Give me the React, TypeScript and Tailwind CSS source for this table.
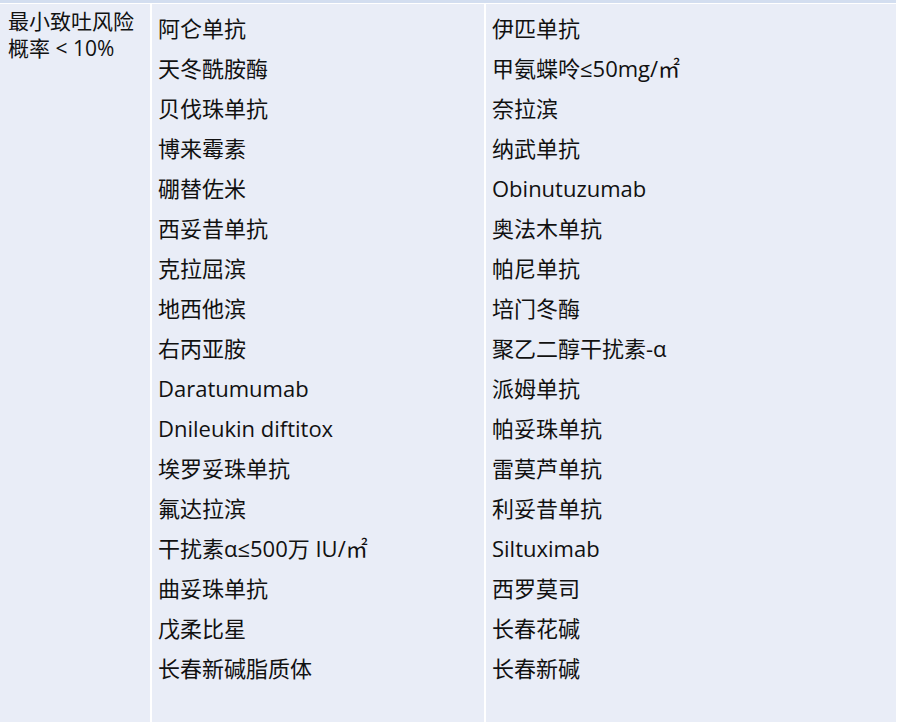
const left = [
  '阿仑单抗',
  '天冬酰胺酶',
  '贝伐珠单抗',
  '博来霉素',
  '硼替佐米',
  '西妥昔单抗',
  '克拉屈滨',
  '地西他滨',
  '右丙亚胺',
  'Daratumumab',
  'Dnileukin diftitox',
  '埃罗妥珠单抗',
  '氟达拉滨',
  '干扰素α≤500万 IU/㎡',
  '曲妥珠单抗',
  '戊柔比星',
  '长春新碱脂质体',
];

const right = [
  '伊匹单抗',
  '甲氨蝶呤≤50mg/㎡',
  '奈拉滨',
  '纳武单抗',
  'Obinutuzumab',
  '奥法木单抗',
  '帕尼单抗',
  '培门冬酶',
  '聚乙二醇干扰素-α',
  '派姆单抗',
  '帕妥珠单抗',
  '雷莫芦单抗',
  '利妥昔单抗',
  'Siltuximab',
  '西罗莫司',
  '长春花碱',
  '长春新碱',
];

function DrugList({ items }: { items: string[] }) {
  return (
    <div className="flex flex-col pt-[4px]">
      {items.map((name) => (
        <div key={name} className="h-[40px] leading-[40px] whitespace-nowrap">
          {name}
        </div>
      ))}
    </div>
  );
}

export default function App() {
  return (
    <div
      className="w-[899px] h-[722px] bg-white flex flex-col overflow-hidden text-[#111] text-[22px]"
      style={{ fontFamily: '"Open Sans", "Noto Sans CJK SC", sans-serif' }}
    >
      {/* tail of the previous row */}
      <div className="h-[3px] w-[896px] bg-[#d3def0] shrink-0" />
      <div className="grid grid-cols-[150px_332px_410px] gap-x-[2px] pt-[1px] flex-1">
        <div className="bg-[#e9edf7] pl-[8px] pt-[4px] text-[21px] leading-[27px]">
          <div>最小致吐风险</div>
          <div>概率 &lt; 10%</div>
        </div>
        <div className="bg-[#e9edf7] pl-[6px]">
          <DrugList items={left} />
        </div>
        <div className="bg-[#e9edf7] pl-[6px]">
          <DrugList items={right} />
        </div>
      </div>
    </div>
  );
}
